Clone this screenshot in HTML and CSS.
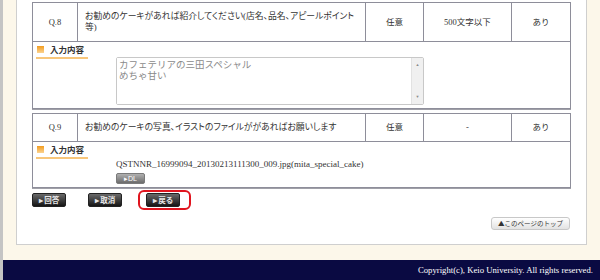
FILE: index.html
```html
<!DOCTYPE html>
<html lang="ja">
<head>
    <meta charset="UTF-8">
    <title>アンケート回答確認</title>
    <link rel="stylesheet" href="styles.css">
</head>
<body>
    <div class="page">
        <div class="wrap">
            <div class="content">
                <table class="question">
                    <colgroup>
                        <col class="c-no"><col class="c-text"><col class="c-req"><col class="c-limit"><col class="c-pub">
                    </colgroup>
                    <tr class="q-head tall">
                        <td class="q-no">Q.8</td>
                        <td class="q-text">お勧めのケーキがあれば紹介してください(店名、品名、アピールポイント等)</td>
                        <td class="q-cell">任意</td>
                        <td class="q-cell">500文字以下</td>
                        <td class="q-cell">あり</td>
                    </tr>
                    <tr>
                        <td colspan="5" class="answer">
                            <div class="answer-label"><span class="mark"></span>入力内容</div>
                            <div class="answer-body">
                                <div class="textbox">
                                    <textarea readonly>カフェテリアの三田スペシャル
めちゃ甘い</textarea>
                                    <div class="scrollbar"><span>&#9650;</span><span>&#9660;</span></div>
                                </div>
                            </div>
                        </td>
                    </tr>
                </table>

                <table class="question">
                    <colgroup>
                        <col class="c-no"><col class="c-text"><col class="c-req"><col class="c-limit"><col class="c-pub">
                    </colgroup>
                    <tr class="q-head">
                        <td class="q-no">Q.9</td>
                        <td class="q-text">お勧めのケーキの写真、イラストのファイルががあればお願いします</td>
                        <td class="q-cell">任意</td>
                        <td class="q-cell">-</td>
                        <td class="q-cell">あり</td>
                    </tr>
                    <tr>
                        <td colspan="5" class="answer">
                            <div class="answer-label"><span class="mark"></span>入力内容</div>
                            <div class="answer-body">
                                <div class="file-name">QSTNNR_16999094_20130213111300_009.jpg(mita_special_cake)</div>
                                <button class="btn-dl">&#9656;DL</button>
                            </div>
                        </td>
                    </tr>
                </table>

                <div class="actions">
                    <button class="btn-dark">&#9656; 回答</button>
                    <button class="btn-dark">&#9656; 取消</button>
                    <span class="highlight"><button class="btn-dark">&#9656; 戻る</button></span>
                </div>

                <div class="page-top">
                    <a href="#" class="btn-top">&#9650;このページのトップ</a>
                </div>
            </div>
        </div>
        <div class="footer">Copyright(c), Keio University. All rights reserved.</div>
    </div>
</body>
</html>
```

FILE: styles.css
```css
body {
    margin: 0;
    background-color: #fcf7ea;
    font-family: "Liberation Serif", "Noto Sans CJK JP", serif;
    color: #333;
}
.page {
    border-left: 3px solid #c4c4c4;
    min-height: 280px;
}
.wrap {
    padding: 0 13px 15px;
}
.content {
    background-color: #fff;
    border: 1px solid #cfcfcf;
    border-top: none;
    padding: 2px 16px 14px 15px;
}
.question {
    width: 538px;
    table-layout: fixed;
    border-collapse: collapse;
    margin-bottom: 4px;
    box-shadow: 0 1px 0 #a0a0a8;
}
.c-no { width: 45px; }
.c-text { width: 288px; }
.c-req { width: 58px; }
.c-limit { width: 88px; }
.c-pub { width: 59px; }
.question td {
    border: 1px solid #8e8e9a;
    font-size: 8.5px;
    line-height: 11px;
}
.q-head td {
    height: 25px;
    text-align: center;
}
.q-head.tall td {
    height: 36px;
}
.q-head .q-text {
    text-align: left;
    padding: 0 6px 0 7px;
    font-size: 8.8px;
    font-feature-settings: "palt";
}
.answer {
    padding: 0 0 3px 3px;
    vertical-align: top;
}
.answer-label {
    display: flex;
    align-items: center;
    width: 51px;
    height: 15px;
    padding-left: 1px;
    border-bottom: 2px solid #f8c67a;
    font-family: "Noto Sans CJK JP", sans-serif;
    font-weight: bold;
    font-size: 8.5px;
}
.mark {
    width: 7px;
    height: 7px;
    margin-right: 6px;
    background: linear-gradient(#f39c1e, #fbd391);
}
.answer-body {
    margin: -2px 0 0 80px;
}
.textbox {
    display: flex;
    width: 308px;
    height: 48px;
    box-sizing: border-box;
    border: 1px solid #c8c8c8;
    border-radius: 2px;
}
textarea {
    flex: 1;
    border: none;
    padding: 1px 2px;
    font-family: "Noto Sans CJK JP", sans-serif;
    font-size: 9.5px;
    line-height: 10.5px;
    color: #8a8a8a;
    resize: none;
    outline: none;
}
.scrollbar {
    display: flex;
    flex-direction: column;
    justify-content: space-between;
    align-items: center;
    width: 11px;
    padding: 4px 0;
    background-color: #f0f0f0;
    border-left: 1px solid #e2e2e2;
    color: #8a8a8a;
    font-size: 4px;
    line-height: 6px;
}
.file-name {
    font-size: 9px;
    line-height: 13px;
    margin-top: 1px;
}
.btn-dl {
    display: block;
    width: 29px;
    height: 11px;
    margin-top: 2px;
    padding: 0;
    border: 1px solid #7a7a7a;
    border-radius: 2px;
    background: linear-gradient(#b0b0b0, #6c6c6c);
    color: #fff;
    font-family: "Liberation Sans", sans-serif;
    font-size: 7px;
    line-height: 9px;
}
.actions {
    display: flex;
    align-items: center;
    gap: 22px;
    margin-top: 5px;
}
.btn-dark {
    width: 34px;
    height: 14px;
    padding: 0;
    border: 1px solid #222;
    border-radius: 2px;
    background: linear-gradient(#6a6a6a, #151515);
    color: #e8e8e8;
    font-family: "Noto Sans CJK JP", sans-serif;
    font-size: 7.5px;
    font-weight: bold;
    line-height: 12px;
}
.highlight {
    position: relative;
    display: flex;
    margin-left: 2px;
}
.highlight::after {
    content: "";
    position: absolute;
    top: -3px;
    bottom: -3px;
    left: -8px;
    right: -11px;
    border: 2px solid #e0141e;
    border-radius: 6px;
}
.page-top {
    display: flex;
    justify-content: flex-end;
    margin-top: 10px;
}
.btn-top {
    display: block;
    width: 77px;
    height: 11px;
    border: 1px solid #c8c8c8;
    border-radius: 3px;
    background: linear-gradient(#fff, #e2e2e2);
    color: #333;
    text-decoration: none;
    text-align: center;
    font-family: "Noto Sans CJK JP", sans-serif;
    font-size: 6.5px;
    line-height: 11px;
}
.footer {
    background-color: #0a0a42;
    color: #fff;
    text-align: right;
    font-size: 8.7px;
    line-height: 21px;
    padding-right: 7px;
}
```
